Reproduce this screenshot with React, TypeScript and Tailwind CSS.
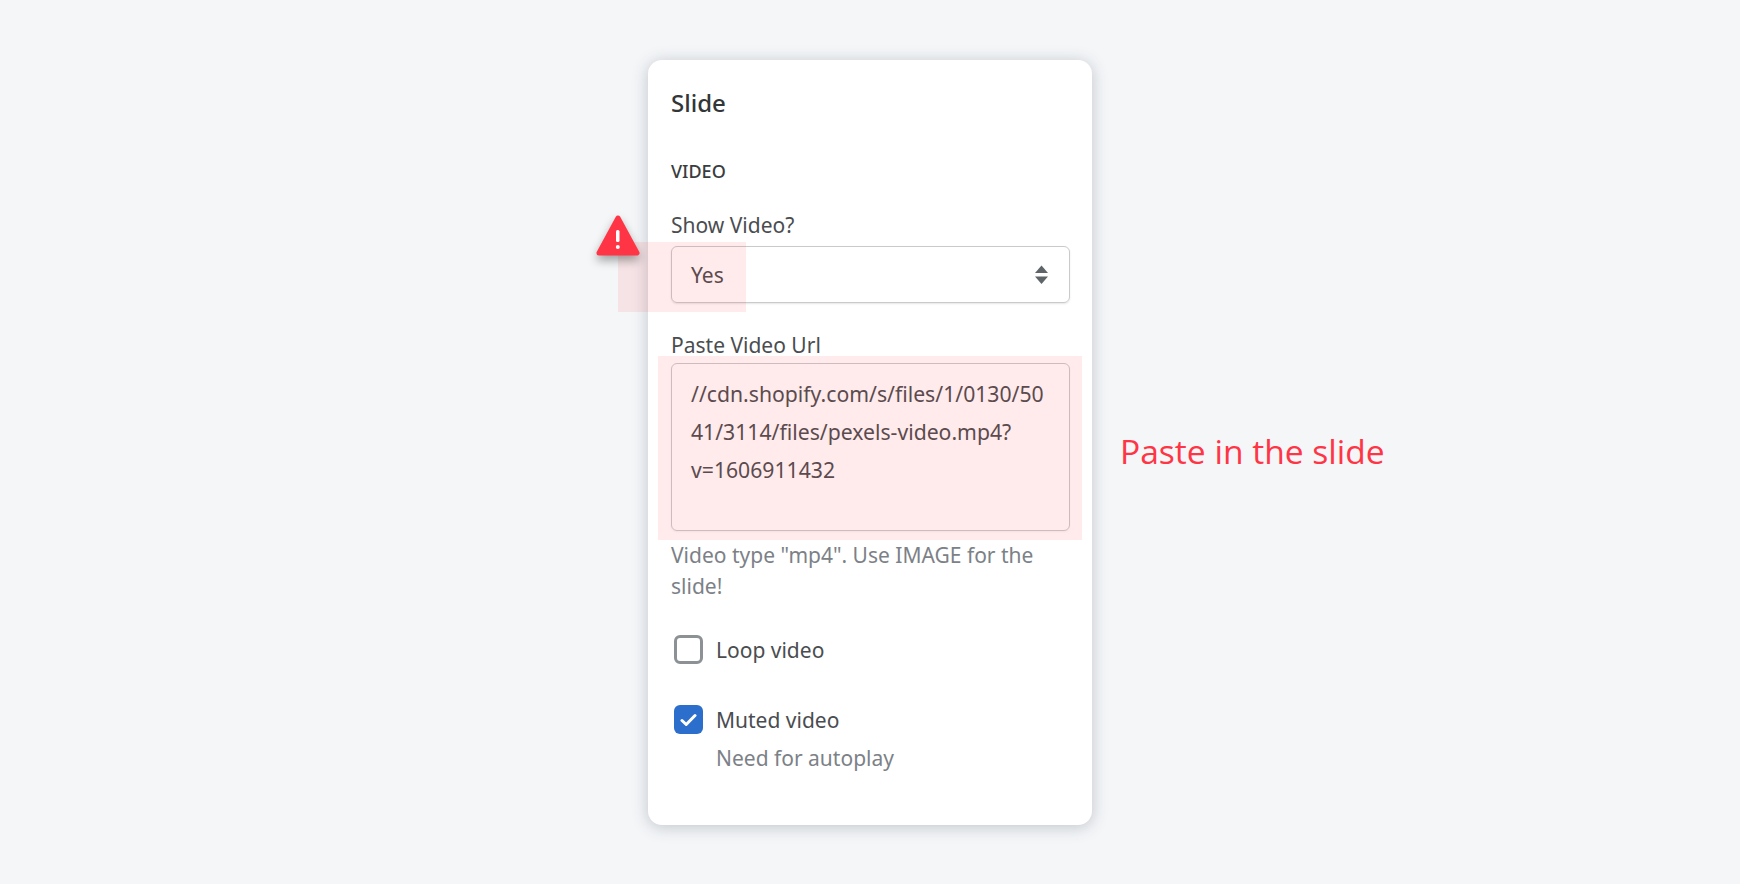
export default function App() {
  const font = { fontFamily: '"Open Sans", "Noto Sans", sans-serif' };
  return (
    <div className="relative h-[884px] w-full overflow-hidden bg-[#f4f6f8] pt-[60px] font-['Noto_Sans',sans-serif]">
      <div className="mx-auto flex h-[765px] w-[444px] flex-col rounded-[14px] bg-white pt-[28px] pr-[22px] pl-[23px] shadow-[0_2px_16px_rgba(60,70,85,0.28)]">
        <h2 className="text-[24px] leading-[30px] font-medium text-[#333638]">Slide</h2>
        <h3 className="mt-[41px] text-[18px] leading-[24px] font-medium text-[#3a3d40]">VIDEO</h3>
        <label className="mt-[28px] text-[21px] leading-[28px] text-[#4a4d50]">Show Video?</label>
        <div className="mt-[7px] flex h-[57px] items-center justify-between rounded-[6px] border border-[#c9cacc] pr-[21px] pl-[19px] text-[21px] text-[#4a4d50] shadow-[0_1px_2px_rgba(0,0,0,0.1)]">
          <span className="pt-[2px]">Yes</span>
          <svg width="13" height="19" viewBox="0 0 13 19" fill="#5f6468">
            <path d="M6.5 0.5 L13 8 H0 Z" />
            <path d="M0 11.5 H13 L6.5 19 Z" />
          </svg>
        </div>
        <label className="mt-[28px] text-[21px] leading-[28px] text-[#4a4d50]">Paste Video Url</label>
        <div className="mt-[4px] h-[168px] rounded-[6px] border border-[#c9cacc] pt-[11px] pr-[20px] pl-[19px] text-[21.2px] leading-[38px] break-all text-[#4a4d50] shadow-[0_1px_2px_rgba(0,0,0,0.05)]">
          //cdn.shopify.com/s/files/1/0130/5041/3114/files/pexels-video.mp4?
          <br />
          v=1606911432
        </div>
        <p className="mt-[9px] text-[21px] leading-[31px] text-[#7c8187]">Video type "mp4". Use IMAGE for the slide!</p>
        <div className="mt-[33px] ml-[3px] flex items-center gap-[13px]">
          <span className="h-[29px] w-[29px] rounded-[6px] border-[3px] border-[#8c9196] bg-white" />
          <span className="text-[21px] leading-[28px] text-[#4a4d50]">Loop video</span>
        </div>
        <div className="mt-[41px] ml-[3px] flex items-center gap-[13px]">
          <span className="flex h-[29px] w-[29px] items-center justify-center rounded-[6px] bg-[#2c6ecb]">
            <svg width="17" height="14" viewBox="0 0 17 14" fill="none" stroke="#fff" strokeWidth="3" strokeLinecap="round" strokeLinejoin="round">
              <path d="M2 7.5 L6.2 11.5 L15 2.5" />
            </svg>
          </span>
          <span className="text-[21px] leading-[28px] text-[#4a4d50]">Muted video</span>
        </div>
        <p className="mt-[10px] ml-[45px] text-[21px] leading-[28px] text-[#7c8187]">Need for autoplay</p>
      </div>

      <div className="absolute top-[242px] left-[618px] h-[70px] w-[128px] bg-[rgba(255,56,70,0.1)]" />
      <div className="absolute top-[356px] left-[658px] h-[184px] w-[424px] bg-[rgba(255,56,70,0.1)]" />
      <svg className="absolute top-[214px] left-[594px] drop-shadow-[0_5px_5px_rgba(0,0,0,0.35)]" width="48" height="44" viewBox="0 0 48 44">
        <path d="M24 4 L43 39 H5 Z" fill="#ff3546" stroke="#ff3546" strokeWidth="5" strokeLinejoin="round" />
        <rect x="22" y="16" width="3.5" height="12" rx="1.5" fill="#fff" />
        <circle cx="23.8" cy="33" r="2" fill="#fff" />
      </svg>
      <div className="absolute top-[429px] left-[1120px] text-[33.6px] leading-[44px] text-[#ff3546]" style={font}>Paste in the slide</div>
    </div>
  );
}
